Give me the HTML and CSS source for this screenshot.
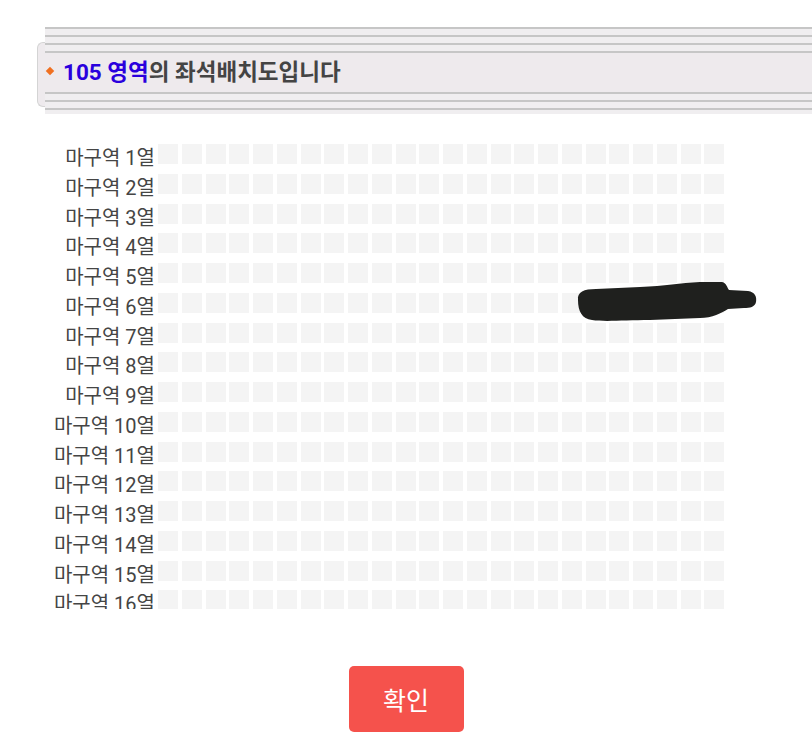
FILE: index.html
```html
<!DOCTYPE html>
<html lang="ko">
<head>
  <meta charset="UTF-8">
  <meta name="viewport" content="width=device-width, initial-scale=1.0">
  <title>좌석배치도</title>
  <link rel="stylesheet" href="styles.css">
</head>
<body>

<!-- Section title -->
<div class="title-band">
  <div class="band-cap"></div>
  <div class="band-main">
    <div class="band-lines"></div>
    <div class="band-body">
      <span class="bullet"></span>
      <h2 class="band-title"><span class="zone">105 영역</span>의 좌석배치도입니다</h2>
    </div>
    <div class="band-lines bottom"></div>
  </div>
</div>

<!-- Seat map -->
<div class="seat-map" id="seatMap">
  <div class="seat-row"><span class="row-label">마구역 1열</span><div class="seats"></div></div>
  <div class="seat-row"><span class="row-label">마구역 2열</span><div class="seats"></div></div>
  <div class="seat-row"><span class="row-label">마구역 3열</span><div class="seats"></div></div>
  <div class="seat-row"><span class="row-label">마구역 4열</span><div class="seats"></div></div>
  <div class="seat-row"><span class="row-label">마구역 5열</span><div class="seats"></div></div>
  <div class="seat-row"><span class="row-label">마구역 6열</span><div class="seats"></div></div>
  <div class="seat-row"><span class="row-label">마구역 7열</span><div class="seats"></div></div>
  <div class="seat-row"><span class="row-label">마구역 8열</span><div class="seats"></div></div>
  <div class="seat-row"><span class="row-label">마구역 9열</span><div class="seats"></div></div>
  <div class="seat-row"><span class="row-label">마구역 10열</span><div class="seats"></div></div>
  <div class="seat-row"><span class="row-label">마구역 11열</span><div class="seats"></div></div>
  <div class="seat-row"><span class="row-label">마구역 12열</span><div class="seats"></div></div>
  <div class="seat-row"><span class="row-label">마구역 13열</span><div class="seats"></div></div>
  <div class="seat-row"><span class="row-label">마구역 14열</span><div class="seats"></div></div>
  <div class="seat-row"><span class="row-label">마구역 15열</span><div class="seats"></div></div>
  <div class="seat-row"><span class="row-label">마구역 16열</span><div class="seats"></div></div>
</div>

<button type="button" class="confirm">확인</button>

<!-- marker scribble over the screenshot -->
<svg class="scribble" width="195" height="55" viewBox="0 0 195 55">
  <path d="M8 25 C7 17 14 14 26 14 L70 12 C95 11 110 8 130 7 L152 7 C157 8 157 13 159 15 L178 16 C185 17 187 22 186 27 C185 32 180 33 174 33 L158 34 C152 38 142 43 130 43 L80 45 C55 45 35 47 22 45 C12 44 8 36 8 25 Z" fill="#1f201e"/>
</svg>

<script>
  // 24 seats per row
  document.querySelectorAll('.seats').forEach(function (row) {
    for (let i = 0; i < 24; i++) {
      const seat = document.createElement('div');
      seat.className = 'seat';
      row.appendChild(seat);
    }
  });
</script>

</body>
</html>
```

FILE: styles.css
```css
body {
  margin: 0;
  padding: 0;
  background: #ffffff;
  font-family: Roboto, "Noto Sans CJK KR", sans-serif;
  color: #444;
  position: relative;
}
.title-band {
  display: flex;
  margin-top: 27px;
}
.band-cap {
  flex: none;
  width: 8px;
  height: 65px;
  margin-left: 37px;
  margin-top: 15px;
  box-sizing: border-box;
  border: 1px solid #d4d4d4;
  border-right: none;
  border-radius: 6px 0 0 6px;
  background: #eeeaed;
}
.band-main {
  flex: 1;
}
.band-lines {
  height: 26px;
  background: repeating-linear-gradient(to bottom, #c6c6c6 0, #c6c6c6 2px, #f0eef0 2px, #f0eef0 8px);
}
.band-lines.bottom {
  height: 22px;
}
.band-body {
  height: 39px;
  box-sizing: border-box;
  padding-bottom: 6px;
  display: flex;
  align-items: center;
  background: #eeeaed;
}
.bullet {
  width: 6px;
  height: 6px;
  margin: 3px 10px 0 2px;
  background: #f07020;
  transform: rotate(45deg);
}
.band-title {
  margin: 0;
  font-size: 22.5px;
  font-weight: 700;
  color: #444;
}
.zone {
  color: #2a00dd;
}
.seat-map {
  margin-top: 26px;
  height: 469px;
  overflow: hidden;
}
.seat-row {
  display: flex;
  height: 29.75px;
}
.row-label {
  flex: none;
  width: 155px;
  margin-right: 3px;
  text-align: right;
  font-size: 20px;
  line-height: 30px;
  padding-top: 3px;
  color: #454545;
  white-space: nowrap;
}
.seats {
  display: flex;
  gap: 3.75px;
  padding-top: 4px;
}
.seat {
  width: 20px;
  height: 20px;
  background: #f4f4f4;
}
.confirm {
  display: block;
  margin: 57px auto 0;
  width: 115px;
  height: 66px;
  background: #f5524c;
  color: #fff;
  border: none;
  border-radius: 5px;
  font-family: Roboto, "Noto Sans CJK KR", sans-serif;
  font-size: 25px;
}
.scribble {
  position: absolute;
  left: 570px;
  top: 275px;
}
```
